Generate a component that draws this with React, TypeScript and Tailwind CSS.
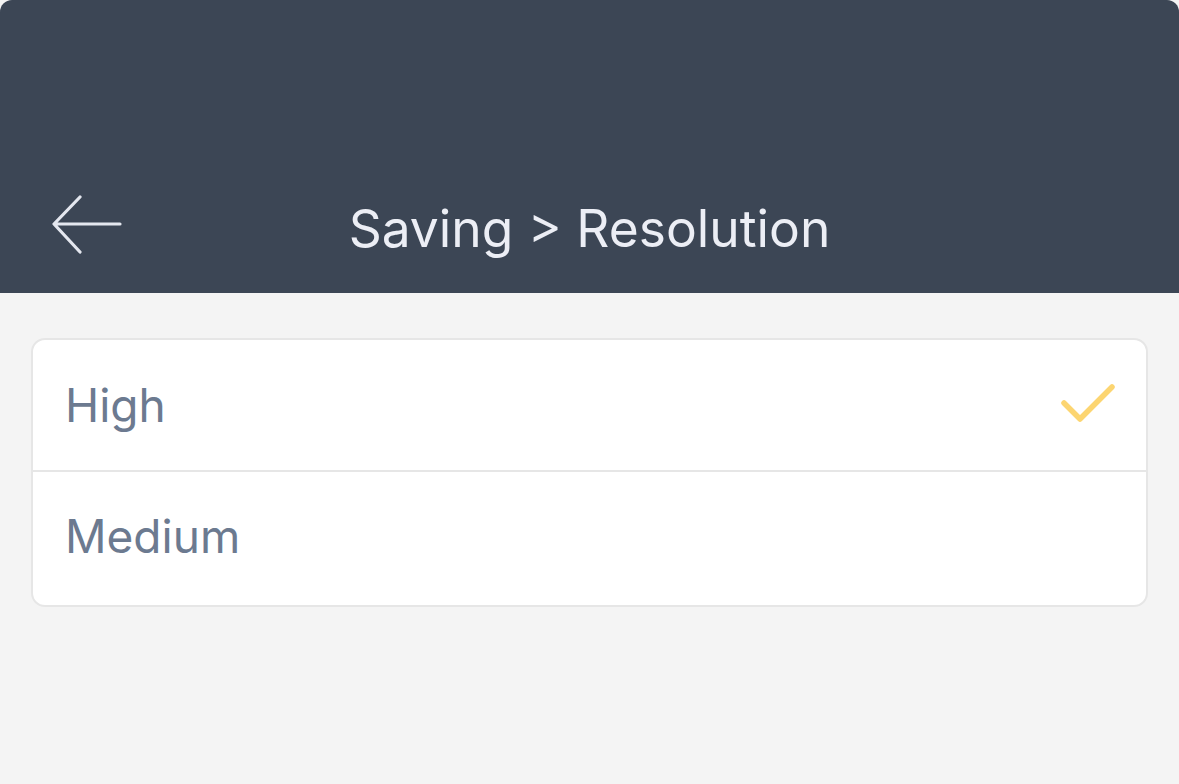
import React from "react";

const options = [
  { label: "High", selected: true },
  { label: "Medium", selected: false },
];

function BackArrow() {
  return (
    <svg width="70" height="62" viewBox="0 0 70 62" fill="none" className="shrink-0">
      <path
        d="M68 30H3M28 3L2 30L28 58"
        stroke="#e4e7ef"
        strokeWidth="3.2"
        strokeLinecap="round"
        strokeLinejoin="round"
      />
    </svg>
  );
}

function Check() {
  return (
    <svg width="54" height="44" viewBox="0 0 54 44" fill="none">
      <path
        d="M3 20L19 36L51 4"
        stroke="#fcd571"
        strokeWidth="5.5"
        strokeLinecap="round"
        strokeLinejoin="round"
      />
    </svg>
  );
}

export default function App() {
  return (
    <div
      className="flex h-[784px] w-[1179px] flex-col overflow-hidden bg-[#f4f4f4]"
      style={{ fontFamily: "Inter, 'Noto Sans', sans-serif" }}
    >
      <header className="relative flex h-[293px] shrink-0 items-end rounded-t-[12px] bg-[#3c4655] pb-[37px]">
        <div className="flex h-[62px] items-center pl-[52px]">
          <BackArrow />
        </div>
        <h1 className="absolute inset-x-0 bottom-[34px] text-center text-[51.5px] leading-[62px] font-normal text-[#eceef5]">
          Saving &gt; Resolution
        </h1>
      </header>

      <div className="px-[31px] pt-[45px]">
        <div className="overflow-hidden rounded-[14px] border-2 border-[#e6e6e6] bg-white">
          {options.map((o, i) => (
            <div
              key={o.label}
              className={
                "flex items-center justify-between pl-[32px] pr-[31px] " +
                (i === 0 ? "h-[132px] border-b-2 border-[#e6e6e6]" : "h-[133px] pb-[6px]")
              }
            >
              <span className="text-[46px] leading-none text-[#6c7a90]">{o.label}</span>
              {o.selected && <Check />}
            </div>
          ))}
        </div>
      </div>
    </div>
  );
}
